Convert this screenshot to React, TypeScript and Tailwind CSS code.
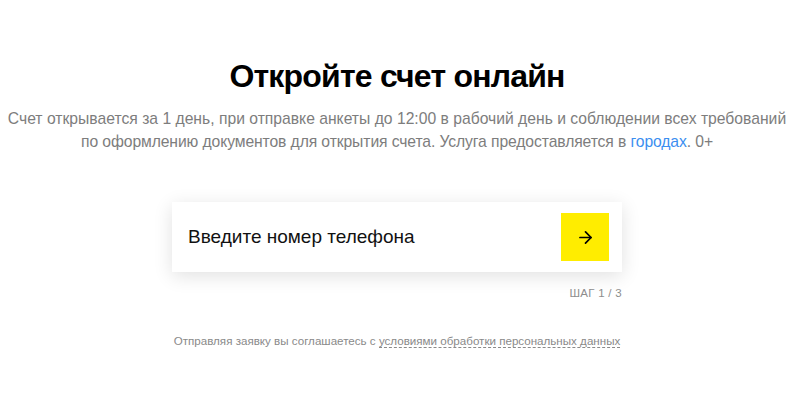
import { ArrowRight } from 'lucide-react';

export default function App() {
  return (
    <div className="w-[794px] h-[402px] bg-white flex flex-col items-center font-['Liberation_Sans',sans-serif]">
      <h1 className="mt-[57px] text-[32px] leading-[38px] font-bold text-black tracking-tight">
        Откройте счет онлайн
      </h1>
      <p className="mt-[12px] text-center text-[15.7px] leading-[23px] text-[#7d7d7d] whitespace-nowrap">
        Счет открывается за 1 день, при отправке анкеты до 12:00 в рабочий день и соблюдении всех требований
        <br />
        <span className="tracking-[-0.1px]">
          по оформлению документов для открытия счета. Услуга предоставляется в{' '}
          <a className="text-[#3b8ef0]">городах</a>. 0+
        </span>
      </p>

      <div className="mt-[49px] w-[450px]">
        <div className="h-[70px] bg-white flex items-center justify-between pl-4 pr-[13px] shadow-[0_4px_18px_rgba(0,0,0,0.12)]">
          <span className="text-[19px] text-[#111]">Введите номер телефона</span>
          <button className="w-12 h-12 bg-[#ffed00] flex items-center justify-center">
            <ArrowRight className="w-[19px] h-[19px] text-black" strokeWidth={2.2} />
          </button>
        </div>
        <div className="mt-[13px] text-right text-[11.5px] tracking-wide text-[#8d8d8d]">ШАГ 1 / 3</div>
      </div>

      <p className="mt-[30px] text-[11.6px] text-[#8a8a8a]">
        Отправляя заявку вы соглашаетесь с{' '}
        <span className="border-b border-dashed border-[#8a8a8a]">условиями обработки персональных данных</span>
      </p>
    </div>
  );
}
